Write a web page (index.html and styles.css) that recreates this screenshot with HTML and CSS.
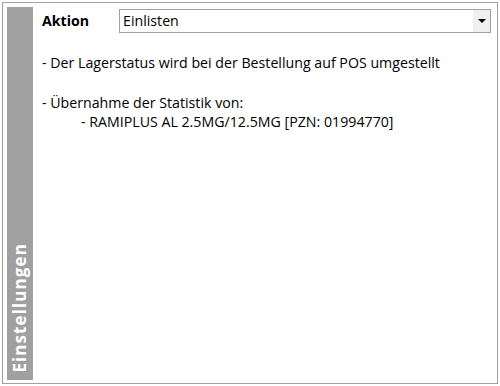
FILE: index.html
```html
<!DOCTYPE html>
<html>
<head>
<meta charset="utf-8">
<link rel="stylesheet" href="styles.css">
</head>
<body>
<div class="panel">
  <div class="sidebar"><span class="sidebar-label">Einstellungen</span></div>
  <div class="content">
    <div class="row">
      <span class="label">Aktion</span>
      <div class="select">
        <span class="select-value">Einlisten</span>
        <span class="select-btn"><svg width="8" height="4" viewBox="0 0 8 4"><path d="M0 0H8L4 4Z" fill="#000"/></svg></span>
      </div>
    </div>
    <div class="info">
      <p class="line">- Der Lagerstatus wird bei der Bestellung auf POS umgestellt</p>
      <p class="line gap">- Übernahme der Statistik von:</p>
      <p class="line sub">- RAMIPLUS AL 2.5MG/12.5MG [PZN: 01994770]</p>
    </div>
  </div>
</div>
</body>
</html>
```
FILE: styles.css
```css
html, body {
  margin: 0;
  padding: 0;
  background: #fff;
}
body {
  padding: 2px;
  font-family: "Open Sans", "Noto Sans", sans-serif;
  font-size: 14.2px;
  color: #000;
}
.panel {
  width: 496px;
  height: 382px;
  box-sizing: border-box;
  border: 1px solid #a0a0a0;
  padding: 4px 3px 3px 4px;
  display: flex;
}
.sidebar {
  width: 26px;
  background: #a0a0a0;
  display: flex;
  flex-direction: column;
  justify-content: flex-end;
  align-items: center;
}
.sidebar-label {
  writing-mode: vertical-rl;
  transform: rotate(180deg);
  color: #fff;
  font-weight: bold;
  font-size: 17px;
  letter-spacing: 1.1px;
  padding-top: 7px;
  line-height: 26px;
}
.content {
  flex: 1;
  padding-left: 9px;
  padding-top: 2px;
}
.row {
  display: flex;
  align-items: center;
  height: 24px;
}
.label {
  font-weight: bold;
  width: 77px;
  margin-top: -2px;
}
.select {
  width: 372px;
  height: 24px;
  box-sizing: border-box;
  border: 1px solid #a0a0a0;
  display: flex;
  align-items: center;
}
.select-value {
  flex: 1;
  padding-left: 3px;
  margin-top: -1px;
}
.select-btn {
  width: 17px;
  height: 22px;
  background: #f0f0f0;
  display: flex;
  align-items: center;
  justify-content: center;
}
.info {
  padding-top: 20px;
}
.line {
  margin: 0;
  line-height: 19px;
  white-space: nowrap;
}
.gap {
  margin-top: 21px;
}
.sub {
  padding-left: 39px;
}
```
